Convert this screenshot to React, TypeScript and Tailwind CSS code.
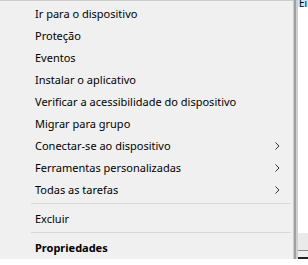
import React from "react";

const Chevron = () => (
  <svg width="5" height="8" viewBox="0 0 5 8" className="shrink-0">
    <path d="M0.5 0.5 L4 4 L0.5 7.5" fill="none" stroke="#333" strokeWidth="1" />
  </svg>
);

type Item = { label: string; sub?: boolean; bold?: boolean };

const group1: Item[] = [
  { label: "Ir para o dispositivo" },
  { label: "Proteção" },
  { label: "Eventos" },
  { label: "Instalar o aplicativo" },
  { label: "Verificar a acessibilidade do dispositivo" },
  { label: "Migrar para grupo" },
  { label: "Conectar-se ao dispositivo", sub: true },
  { label: "Ferramentas personalizadas", sub: true },
  { label: "Todas as tarefas", sub: true },
];

const Row = ({ item }: { item: Item }) => (
  <div className="h-[22px] flex items-center pl-[35px] pr-[13px]">
    <span className={`flex-1 whitespace-nowrap ${item.bold ? "font-bold" : ""}`}>{item.label}</span>
    {item.sub && <Chevron />}
  </div>
);

const Sep = () => (
  <div className="h-[7px] pt-[2px] pl-[31px] pr-[2px]">
    <div className="h-px w-full bg-[#d7d7d7]" />
  </div>
);

export default function App() {
  return (
    <div
      className="w-[308px] h-[265px] bg-white flex items-start overflow-hidden text-[11px] text-black"
      style={{ fontFamily: "'Noto Sans', 'Segoe UI', sans-serif" }}
    >
      <div className="w-[293px] bg-[#f0f0f0] border-t border-[#cccccc] flex flex-col pt-[2px]">
        {group1.map((it) => (
          <Row key={it.label} item={it} />
        ))}
        <Sep />
        <Row item={{ label: "Excluir" }} />
        <Sep />
        <Row item={{ label: "Propriedades", bold: true }} />
      </div>
      <div className="w-[5px] h-[259px] flex">
        <div className="w-px bg-[#cccccc]" />
        <div className="w-[2px] bg-[#a0a0a0]" />
        <div className="w-[2px] bg-[#d0d0d0]" />
      </div>
      <div className="flex-1 flex flex-col">
        <div className="h-[7px] bg-[#cce8ff] text-[10px] leading-[7px] overflow-hidden pl-[1px]">Ei</div>
        <div className="h-[226px]" />
        <div className="h-[17px] bg-[#eaeaea]" />
        <div className="h-px bg-[#888]" />
        <div className="h-[6px] bg-[#f0f0f0]" />
        <div className="h-[2px] bg-[#222]" />
      </div>
    </div>
  );
}
